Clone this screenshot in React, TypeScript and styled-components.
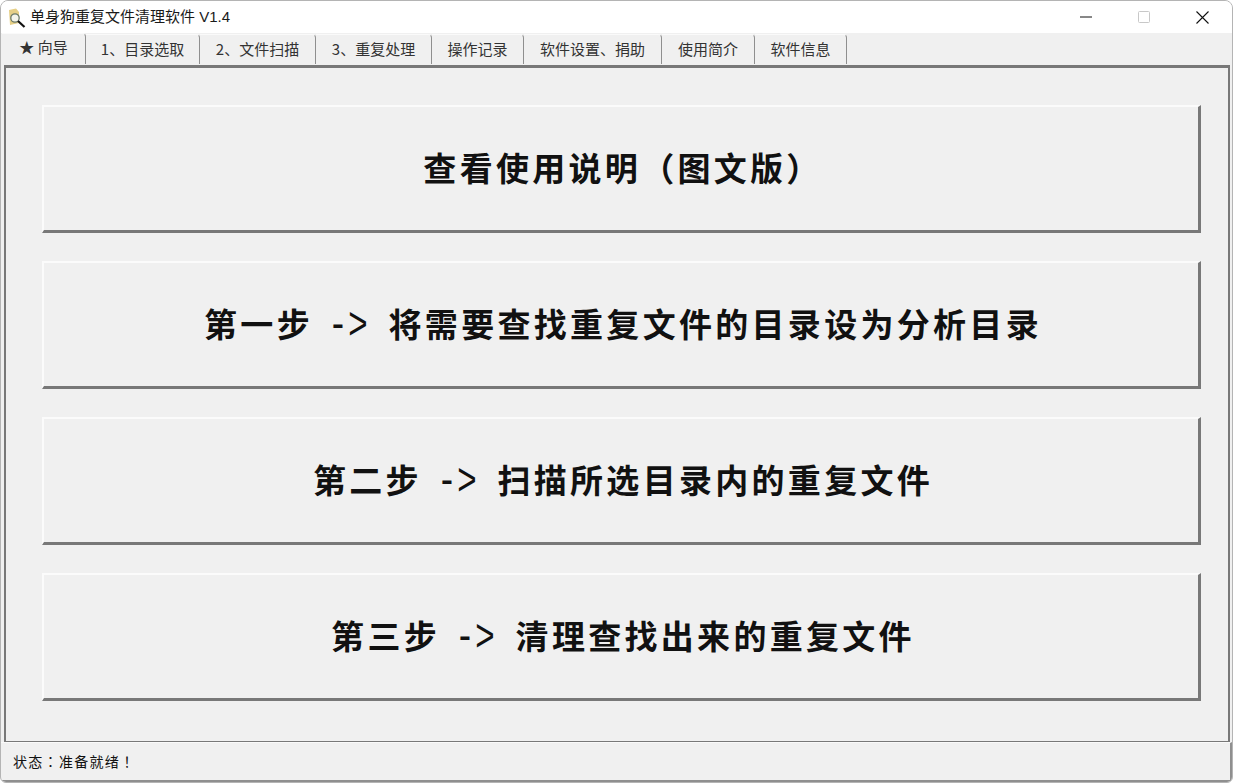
import React from "react";
import styled, { createGlobalStyle } from "styled-components";

const Global = createGlobalStyle`
  html, body { margin: 0; padding: 0; height: 100%; background: #fff; overflow: hidden; }
  #root { height: 100%; }
  * { box-sizing: border-box; }
`;

const FONT = `"Noto Sans CJK SC", "Liberation Sans", sans-serif`;

const Window = styled.div`
  width: 1233px;
  height: 783px;
  display: flex;
  flex-direction: column;
  background: #f0f0f0;
  border: 1px solid #b4b4b4;
  border-radius: 8px 8px 6px 6px;
  overflow: hidden;
  font-family: ${FONT};
`;

const TitleBar = styled.div`
  height: 32px;
  flex: none;
  background: #fff;
  display: flex;
  align-items: center;
  padding-left: 6px;
`;

const AppIcon = styled.svg`
  width: 20px;
  height: 20px;
  flex: none;
  margin-top: 2px;
`;

const Title = styled.div`
  margin-left: 3px;
  font-size: 15px;
  color: #1a1a1a;
  font-family: "Liberation Sans", "Noto Sans CJK SC", sans-serif;
  line-height: 20px;
  flex: 1;
`;

const WinControls = styled.div`
  display: flex;
  align-items: center;
  height: 100%;
  padding-right: 1px;
`;

const WinButton = styled.div`
  width: 58px;
  height: 32px;
  display: flex;
  align-items: center;
  justify-content: center;
`;

const TabBar = styled.div`
  height: 33px;
  flex: none;
  display: flex;
  align-items: stretch;
  padding-left: 1px;
`;

const Tab = styled.div<{ $w: number; $active?: boolean }>`
  width: ${(p) => p.$w}px;
  height: ${(p) => (p.$active ? 31 : 30)}px;
  margin-top: ${(p) => (p.$active ? 0 : 1)}px;
  display: flex;
  align-items: center;
  justify-content: center;
  padding-bottom: ${(p) => (p.$active ? 5 : 2)}px;
  font-size: 15px;
  line-height: 20px;
  color: #333;
  background: #f0f0f0;
  border-top: 1px solid #fafafa;
  border-right: 1px solid #8f8f8f;
  border-top-right-radius: 4px;
  white-space: pre;
`;

const Page = styled.div`
  flex: 1;
  margin: -1px 2px 0 3px;
  border-top: 3px solid #787878;
  border-left: 2px solid #787878;
  border-right: 2px solid #787878;
  border-bottom: 1px solid #787878;
  padding: 37px 27px 0 36px;
  display: flex;
  flex-direction: column;
  gap: 28px;
`;

const BigButton = styled.div`
  height: 128px;
  flex: none;
  display: flex;
  align-items: center;
  justify-content: center;
  background: #f0f0f0;
  border-top: 2px solid #fbfbfb;
  border-left: 2px solid #fbfbfb;
  border-right: 3px solid #787878;
  border-bottom: 3px solid #787878;
  padding: 0 0 4px 4px;
`;

const ButtonLabel = styled.span`
  font-size: 33px;
  font-weight: 700;
  line-height: 44px;
  letter-spacing: 3.3px;
  word-spacing: 8.5px;
  color: #111;
  white-space: pre;
`;

const Arrow = styled.span`
  display: inline-block;
  width: 37px;
  margin: 0 4px 0 -4px;
  font-family: "Liberation Mono", monospace;
  font-weight: 400;
  font-size: 46px;
  line-height: 0;
  letter-spacing: 0;
  vertical-align: -2px;
  transform: scaleX(0.72);
  transform-origin: 0 50%;
`;

const StatusBar = styled.div`
  height: 40px;
  flex: none;
  display: flex;
  align-items: center;
  padding: 0 12px 2px;
  font-family: "Noto Sans CJK TC", "Liberation Sans", sans-serif;
  font-size: 14px;
  letter-spacing: 1.3px;
  color: #111;
  border-top: 1px solid #fafafa;
  border-right: 2px solid #8f8f8f;
  border-bottom: 2px solid #8f8f8f;
`;

const tabs: [string, number, boolean?][] = [
  ["★ 向导", 84, true],
  ["1、目录选取", 114],
  ["2、文件扫描", 116],
  ["3、重复处理", 116],
  ["操作记录", 92],
  ["软件设置、捐助", 138],
  ["使用简介", 93],
  ["软件信息", 92],
];

const buttons: { head?: string; tail: string }[] = [
  { tail: "查看使用说明（图文版）" },
  { head: "第一步", tail: "将需要查找重复文件的目录设为分析目录" },
  { head: "第二步", tail: "扫描所选目录内的重复文件" },
  { head: "第三步", tail: "清理查找出来的重复文件" },
];

export default function App() {
  return (
    <>
      <Global />
      <Window>
        <TitleBar>
          <AppIcon viewBox="0 0 20 20">
            <path d="M2 2 L9 0.5 L12 4 L12 15 L3 17 Z" fill="#e6cf86" />
            <circle cx="8" cy="10" r="4.2" fill="#f4f4ea" stroke="#6c7a68" strokeWidth="1.3" />
            <path d="M11 13 L17.5 19" stroke="#111" strokeWidth="2.2" />
          </AppIcon>
          <Title>单身狗重复文件清理软件 V1.4</Title>
          <WinControls>
            <WinButton>
              <svg width="12" height="2" viewBox="0 0 12 2"><path d="M0 1H12" stroke="#111" strokeWidth="1" /></svg>
            </WinButton>
            <WinButton>
              <svg width="12" height="12" viewBox="0 0 12 12"><rect x="0.5" y="0.5" width="11" height="11" rx="1" fill="none" stroke="#c8c8c8" /></svg>
            </WinButton>
            <WinButton>
              <svg width="13" height="13" viewBox="0 0 13 13"><path d="M0.5 0.5L12.5 12.5M12.5 0.5L0.5 12.5" stroke="#111" strokeWidth="1.1" /></svg>
            </WinButton>
          </WinControls>
        </TitleBar>
        <TabBar>
          {tabs.map(([label, w, active]) => (
            <Tab key={label} $w={w} $active={active}>{label}</Tab>
          ))}
        </TabBar>
        <Page>
          {buttons.map((b) => (
            <BigButton key={b.tail}>
              <ButtonLabel>
                {b.head ? <>{b.head} <Arrow>-&gt;</Arrow> {b.tail}</> : b.tail}
              </ButtonLabel>
            </BigButton>
          ))}
        </Page>
        <StatusBar>状态：准备就绪！</StatusBar>
      </Window>
    </>
  );
}
